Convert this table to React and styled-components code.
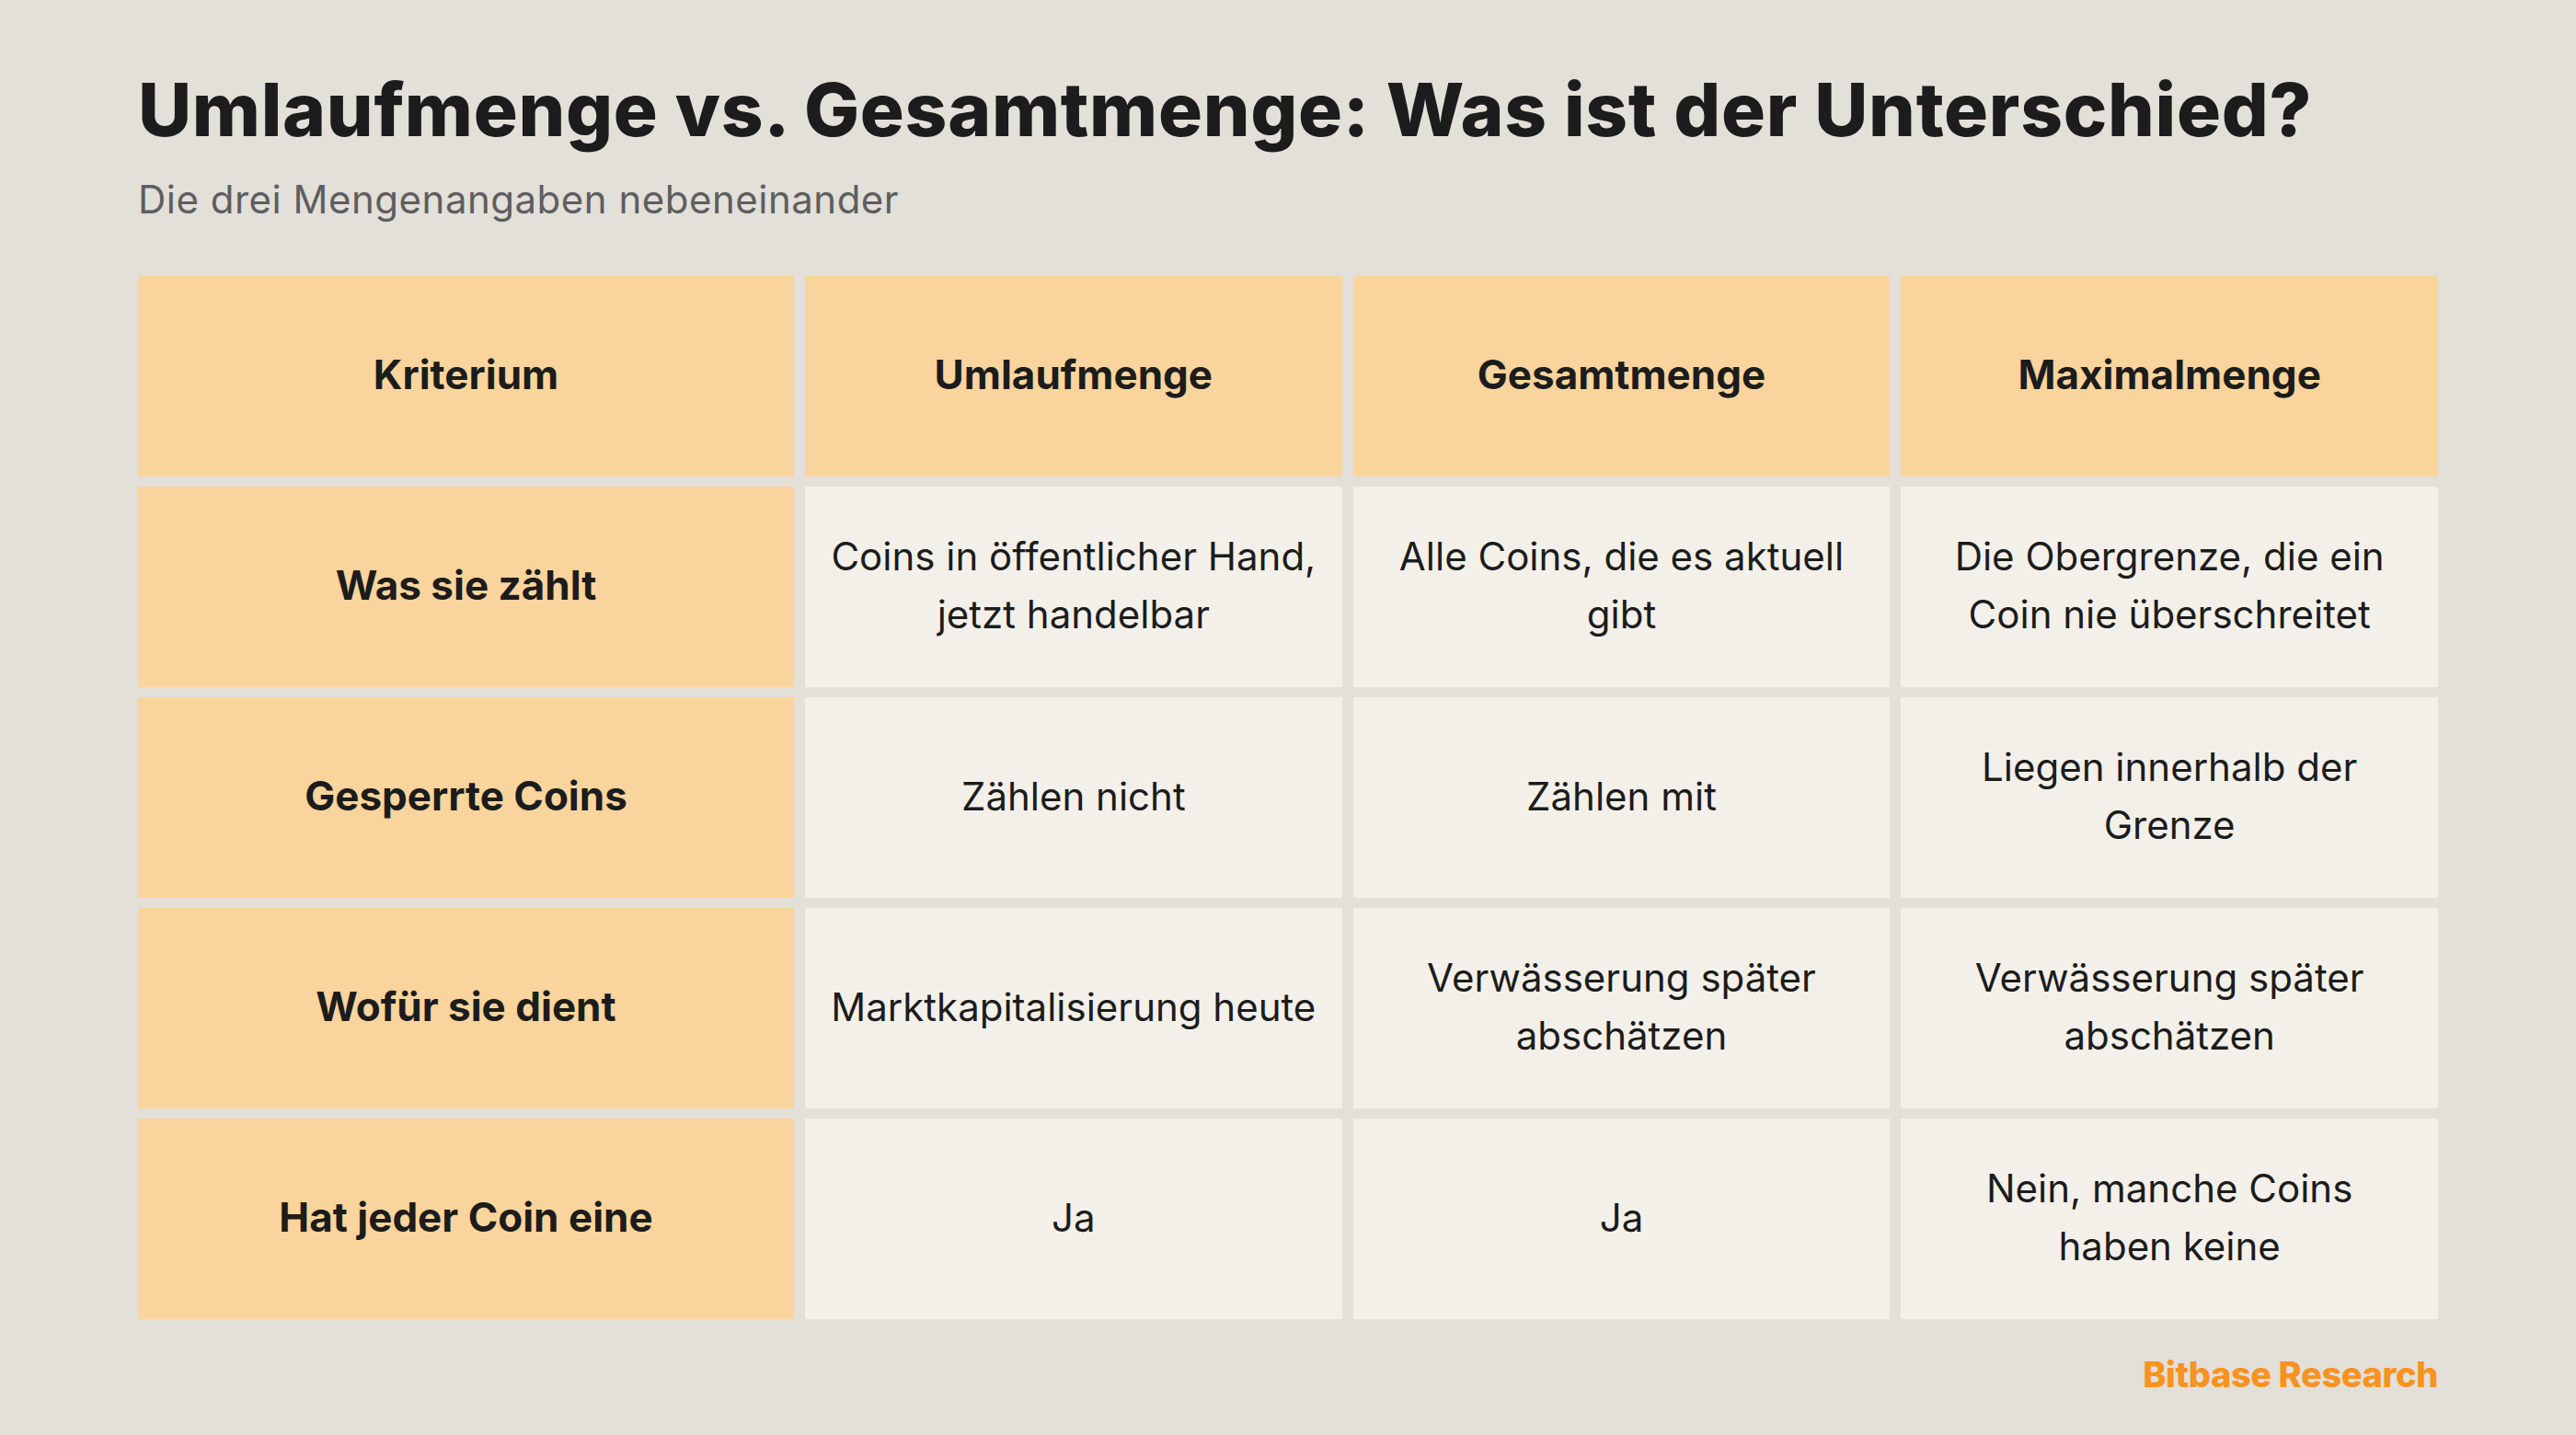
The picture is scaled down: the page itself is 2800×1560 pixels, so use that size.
import React from "react";
import styled, { createGlobalStyle } from "styled-components";

const GlobalStyle = createGlobalStyle`
  html, body {
    margin: 0;
    padding: 0;
    background: #e3dfd9;
  }
  body {
    font-family: "Inter", "Noto Sans", sans-serif;
    color: #1c1c1c;
  }
`;

const Page = styled.div`
  width: 2800px;
  height: 1560px;
  box-sizing: border-box;
  padding: 79px 150px 0 150px;
  display: flex;
  flex-direction: column;
`;

const Title = styled.h1`
  margin: 0;
  font-size: 80px;
  line-height: 1;
  font-weight: 800;
  color: #1c1c1c;
  letter-spacing: 0.7px;
`;

const Subtitle = styled.p`
  margin: 37px 0 0 0;
  font-size: 42px;
  line-height: 1;
  font-weight: 400;
  color: #5e5e5e;
  letter-spacing: 0.5px;
`;

const Grid = styled.div`
  margin-top: 62px;
  display: grid;
  grid-template-columns: 713px repeat(3, 1fr);
  grid-auto-rows: 218px;
  gap: 11px 12px;
`;

const Cell = styled.div`
  display: flex;
  align-items: center;
  justify-content: center;
  text-align: center;
  padding: 0 28px 4px;
  box-sizing: border-box;
  background: ${(props) => (props.head ? "#f9d49c" : "#f3f0e9")};
  font-size: ${(props) => (props.head ? "44px" : "42px")};
  font-weight: ${(props) => (props.head ? 700 : 400)};
  line-height: 1.5;
  color: #1c1c1c;
`;

const Footer = styled.div`
  margin-top: 41px;
  align-self: flex-end;
  font-size: 38px;
  line-height: 1;
  font-weight: 800;
  color: #f7931e;
  letter-spacing: -0.4px;
`;

const header = ["Kriterium", "Umlaufmenge", "Gesamtmenge", "Maximalmenge"];

const rows = [
  [
    "Was sie zählt",
    "Coins in öffentlicher Hand, jetzt handelbar",
    "Alle Coins, die es aktuell gibt",
    "Die Obergrenze, die ein Coin nie überschreitet",
  ],
  ["Gesperrte Coins", "Zählen nicht", "Zählen mit", "Liegen innerhalb der Grenze"],
  [
    "Wofür sie dient",
    "Marktkapitalisierung heute",
    "Verwässerung später abschätzen",
    "Verwässerung später abschätzen",
  ],
  ["Hat jeder Coin eine", "Ja", "Ja", "Nein, manche Coins haben keine"],
];

const App = () => {
  return (
    <>
      <GlobalStyle />
      <Page>
        <Title>Umlaufmenge vs. Gesamtmenge: Was ist der Unterschied?</Title>
        <Subtitle>Die drei Mengenangaben nebeneinander</Subtitle>
        <Grid>
          {header.map((h) => (
            <Cell head key={h}>
              {h}
            </Cell>
          ))}
          {rows.map((r) =>
            r.map((c, i) => (
              <Cell head={i === 0} key={r[0] + i}>
                {c}
              </Cell>
            ))
          )}
        </Grid>
        <Footer>Bitbase Research</Footer>
      </Page>
    </>
  );
};

export default App;
